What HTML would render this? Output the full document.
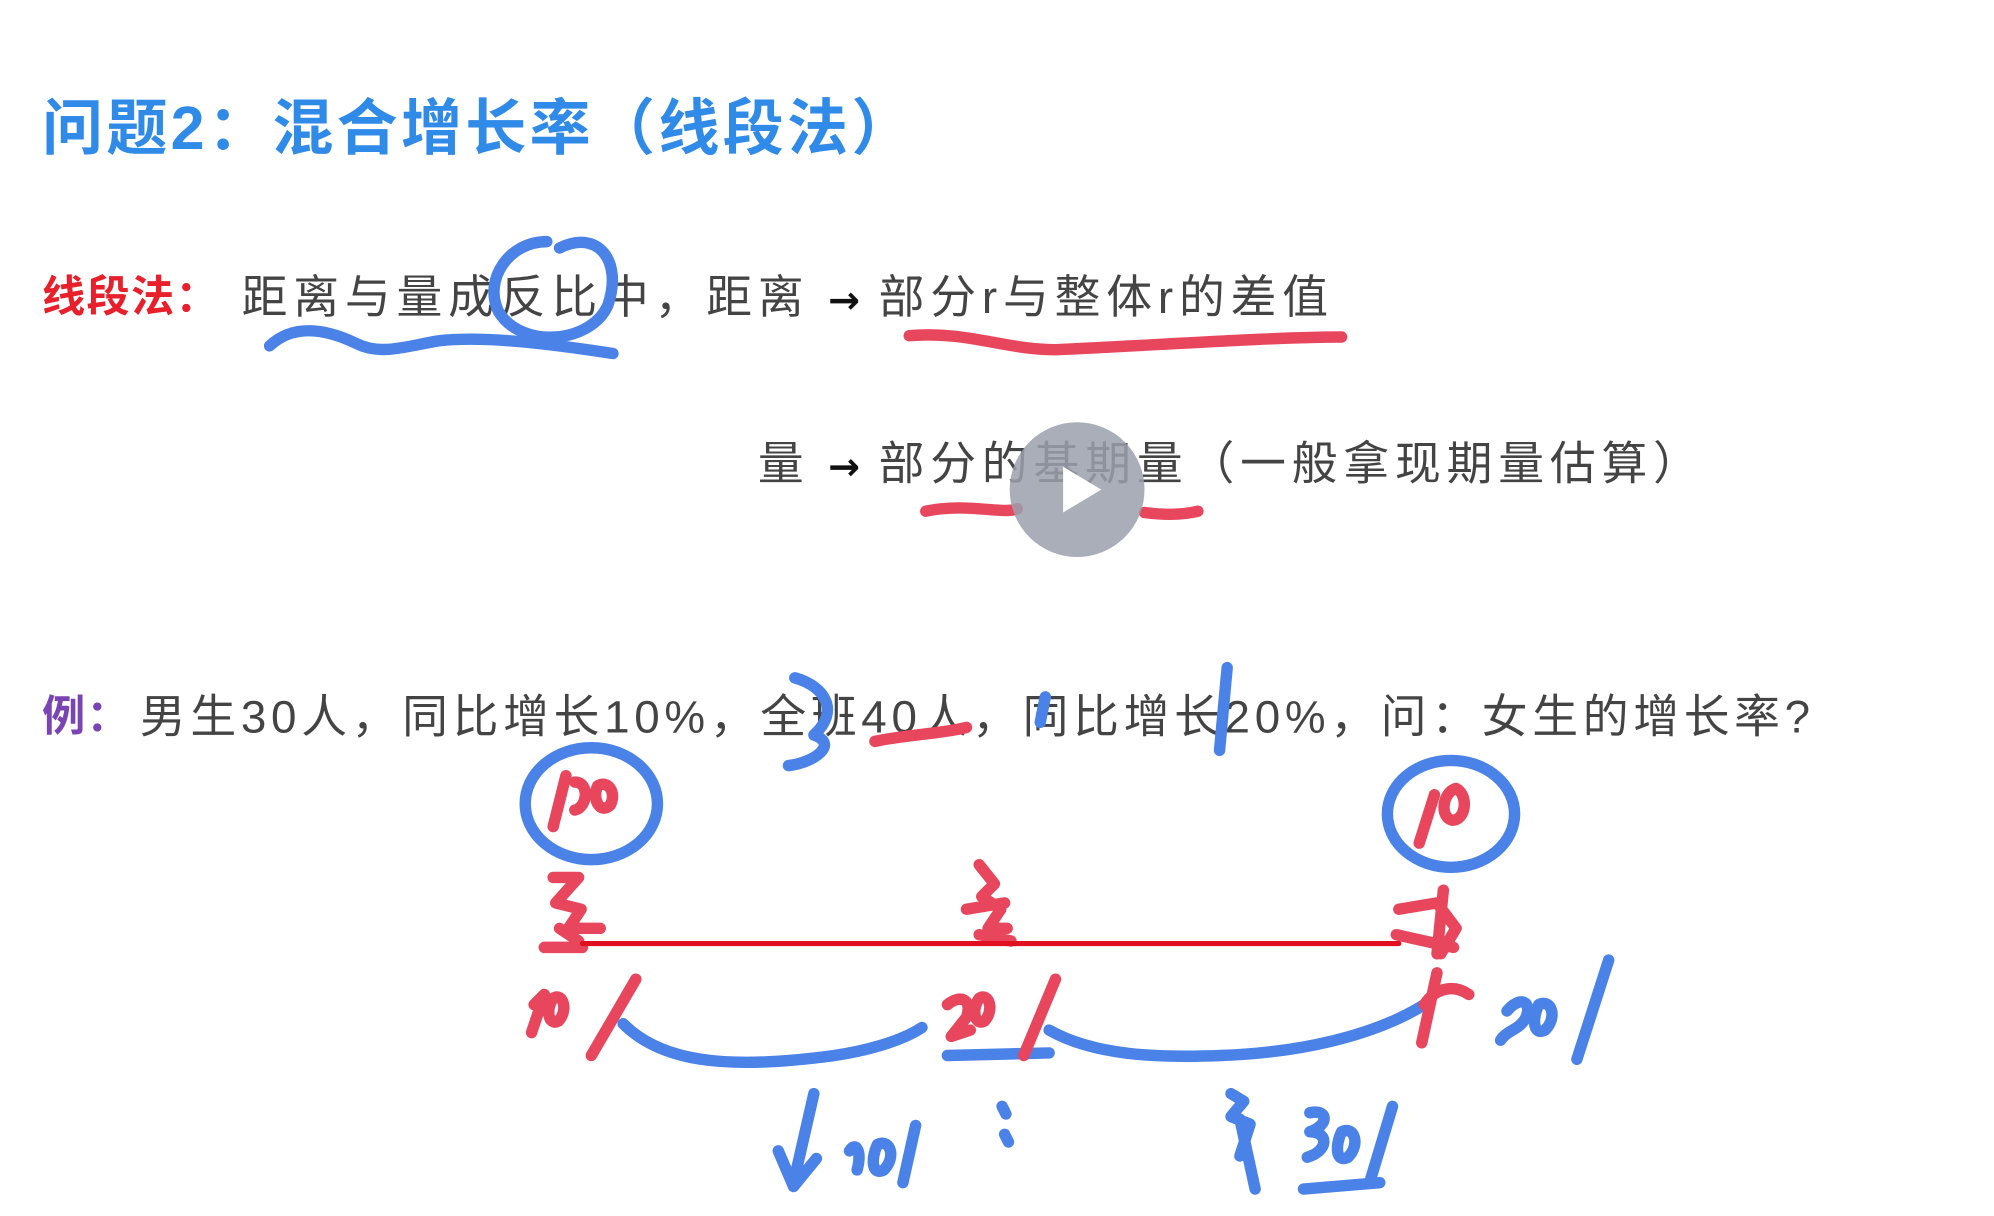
<!DOCTYPE html>
<html><head><meta charset="utf-8">
<style>
html,body{margin:0;padding:0;background:#fff;width:1994px;height:1216px;overflow:hidden}
#w{position:absolute;left:0;top:0;width:1568px;height:956px;transform:scale(1.27168);transform-origin:0 0;font-family:"Liberation Sans","Noto Sans CJK SC",sans-serif}
.t{position:absolute;white-space:nowrap}
.b{font-size:36px;line-height:44px;color:#444;letter-spacing:4.6px}
.ar{font-family:"DejaVu Sans",sans-serif;font-weight:bold;color:#111;font-size:30px;letter-spacing:0}
svg{position:absolute;left:0;top:0}
</style></head><body><div id="w">
<div class="t" style="left:33px;top:72px;font-size:48px;font-weight:bold;color:#2f8ae8;line-height:60px;letter-spacing:2.6px">问题2：混合增长率（线段法）</div>
<div class="t b" style="left:33px;top:212px;font-weight:bold;color:#e8202c;letter-spacing:1px;font-size:34px">线段法：</div>
<div class="t b" style="left:190px;top:212px">距离与量成反比中，距离 <span class="ar">→</span> 部分r与整体r的差值</div>
<div class="t b" style="left:596px;top:343px">量 <span class="ar">→</span> 部分的基期量（一般拿现期量估算）</div>
<div class="t b" style="left:33px;top:542px;font-weight:bold;color:#7a44b4;letter-spacing:1px;font-size:34px">例：</div>
<div class="t b" style="left:110px;top:542px;letter-spacing:3.7px">男生30人，同比增长10%，全班40人，同比增长20%，问：女生的增长率?</div>
<svg width="1568" height="956" viewBox="0 0 1568 956" fill="none" stroke-linecap="round" stroke-linejoin="round">
<g stroke="#4a82e8" stroke-width="9">
<path d="M212 272 C230 255 255 258 280 270 C300 280 320 272 345 268 C380 264 430 270 482 278"/>
<path d="M440 195 C470 180 490 205 478 240 C465 270 410 275 392 245 C380 220 400 190 430 190"/>
<path d="M625 533 C650 540 660 560 640 578 C660 585 640 600 620 602"/>
<path d="M822 548 l-4 20"/><path d="M965 525 l-6 65"/>
<ellipse cx="465" cy="632" rx="52" ry="44"/>
<ellipse cx="1141" cy="640" rx="50" ry="42"/>
<path d="M490 805 C520 835 570 840 640 832 C680 828 710 818 725 808"/>
<path d="M825 810 C860 830 910 832 960 830 C1020 828 1080 815 1120 790"/>
<path d="M745 830 l80 -2"/>
<path d="M640 860 l-16 70 M612 905 l12 28 l18 -22 M668 905 c5 -8 10 0 6 15 M690 900 c10 -5 15 10 5 20 c-10 5 -10 -10 -5 -20 M720 885 l-10 45"/>
<path d="M788 870 l3 6 M790 892 l3 6"/>
<path d="M968 860 l10 6 l-10 12 l15 6 l-8 25 M975 880 l12 55 M1030 875 c15 -3 15 10 0 15 c15 0 15 15 -2 20 M1055 890 c10 -5 15 10 5 20 c-10 5 -10 -10 -5 -20 M1095 870 l-18 60 M1025 935 l60 -5"/>
<path d="M1185 795 c10 -12 20 -8 15 5 c-5 10 -15 10 -20 18 M1210 790 c10 -5 15 10 5 20 c-10 5 -10 -10 -5 -20 M1265 755 l-25 78"/>
</g>
<g stroke="#e8465c" stroke-width="9">
<path d="M715 264 C760 260 790 275 830 275 C900 272 1000 265 1055 265"/>
<path d="M728 402 C760 395 790 405 800 400 M900 403 C915 405 930 405 942 402"/>
<path d="M688 583 C710 578 740 577 760 572"/>
<path d="M445 610 l-10 40 M452 615 c12 0 10 20 0 22 M470 618 c8 -5 15 5 10 15 c-8 8 -15 -5 -10 -15"/>
<path d="M1128 625 l-12 38 M1145 620 c10 5 8 25 -3 25 c-10 -2 -8 -22 3 -25"/>
<path d="M435 690 l20 0 l-18 20 l20 5 l-10 15 l25 0 M440 730 l15 10 M428 745 l30 0"/>
<path d="M770 680 l12 15 l-10 10 l15 10 l-10 15 l15 0 M760 715 l30 -5 M770 735 l25 5"/>
<path d="M1100 715 l30 -5 l15 20 l-12 20 M1135 700 l-5 50 M1098 735 l45 10"/>
<path d="M420 790 l8 -8 l-10 30 M435 785 c8 -5 12 10 4 18 c-8 4 -10 -10 -4 -18 M500 770 l-35 60"/>
<path d="M745 790 c10 -8 20 -5 15 10 l-12 15 l15 -5 M770 785 c8 -5 12 10 4 18 c-8 4 -10 -10 -4 -18 M830 770 l-25 60"/>
<path d="M1130 765 l-12 55 M1120 790 c10 -15 25 -15 35 -8"/>
</g>
<line x1="458" y1="742" x2="1100" y2="742" stroke="#e01020" stroke-width="4"/>
<circle cx="847" cy="385" r="53" fill="#9aa0ad" fill-opacity="0.85"/>
<path d="M836 367 L836 403 L866 385 Z" fill="#fff"/>
</svg>
</div></body></html>
